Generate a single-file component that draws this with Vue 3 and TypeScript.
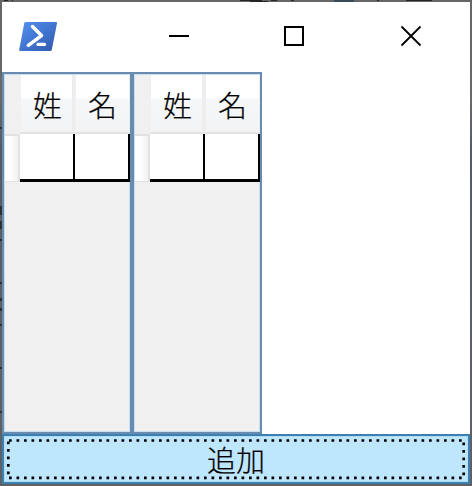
<script setup lang="ts">
const grids: { id: number; columns: string[] }[] = [
  { id: 1, columns: ['姓', '名'] },
  { id: 2, columns: ['姓', '名'] },
]

const marks = [
  { x: 12, y: 0, w: 1 }, { x: 240, y: 0, w: 22 }, { x: 250, y: 1, w: 18 },
  { x: 271, y: 0, w: 6 }, { x: 291, y: 0, w: 3 }, { x: 377, y: 0, w: 2 },
  { x: 406, y: 0, w: 26 }, { x: 4, y: 0, w: 4 },
]
const leftMarks = [
  { y: 127, h: 2 }, { y: 206, h: 9 }, { y: 221, h: 8 }, { y: 239, h: 2 },
  { y: 282, h: 2 }, { y: 298, h: 3 }, { y: 308, h: 3 }, { y: 324, h: 2 },
  { y: 367, h: 2 }, { y: 411, h: 2 },
]
</script>

<template>
  <div class="desktop">
    <svg class="backdrop" width="472" height="486" aria-hidden="true">
      <rect v-for="(m, i) in marks" :key="'t' + i" :x="m.x" :y="m.y" :width="m.w" height="1" fill="#252525" />
      <rect x="334" y="0" width="20" height="2" fill="#394b59" />
      <rect v-for="(m, i) in leftMarks" :key="'l' + i" x="0" :y="m.y" width="2" :height="m.h" fill="#303030" />
    </svg>
    <main class="window">
      <header class="titlebar">
        <svg class="logo" width="40" height="32" viewBox="0 0 40 32">
          <defs>
            <linearGradient id="blue" x1="0" y1="0" x2="1" y2="1">
              <stop offset="0" stop-color="#5391f0" />
              <stop offset=".5" stop-color="#4275d1" />
              <stop offset="1" stop-color="#3158a8" />
            </linearGradient>
          </defs>
          <path d="M7 1H37Q38.2 1 38 2.3L32.8 28.7Q32.5 30 31 30H1.3Q0 30 .2 28.7L5.2 2.3Q5.5 1 7 1Z" fill="url(#blue)" />
          <path d="M13.5 5.6L22.5 14.6L9.3 24.3" fill="none" stroke="#fff" stroke-width="3.5" stroke-linecap="round" stroke-linejoin="round" />
          <path d="M19 23.4H25.5" stroke="#fff" stroke-width="3.2" stroke-linecap="round" />
        </svg>
        <svg class="controls" width="256" height="24" viewBox="0 0 256 24" fill="none" stroke="#000" stroke-width="2">
          <path d="M2 12H22" />
          <rect x="118" y="3" width="18" height="18" />
          <path d="M234.5 2.5L253.5 21.5M253.5 2.5L234.5 21.5" stroke-width="1.8" />
        </svg>
      </header>
      <section class="content">
        <div v-for="grid in grids" :key="grid.id" class="data-grid">
          <div class="head">
            <span class="corner"></span>
            <span v-for="col in grid.columns" :key="col" class="column">{{ col }}</span>
          </div>
          <div class="row">
            <span class="row-header"></span>
            <span v-for="col in grid.columns" :key="col" class="cell"></span>
          </div>
        </div>
      </section>
      <button class="add" type="button">
        <svg class="focus" width="464" height="44" aria-hidden="true" fill="none" stroke="#000" stroke-width="2.7">
          <path d="M5 3.5H458.5" stroke-dasharray="2.7 4.8" />
          <path d="M5 40.8H458.5" stroke-dasharray="2.7 4.8" />
          <path d="M4.3 4.5V39" stroke-dasharray="2.7 4.8" />
          <path d="M459.7 5.5V39" stroke-dasharray="2.7 4.8" />
        </svg>
        <span class="label">追加</span>
      </button>
    </main>
  </div>
</template>

<style>
body {
  margin: 0;
}
</style>

<style scoped>
.desktop {
  position: relative;
  box-sizing: border-box;
  width: 472px;
  height: 486px;
  padding: 2px;
  background: linear-gradient(#666 0, #696969 100px, #555b66 150px, #5c6066 350px, #5e6063 100%);
  font-family: "Noto Sans CJK JP", sans-serif;
  font-weight: 300;
  color: #000;
}
.backdrop {
  position: absolute;
  inset: 0;
}
.window {
  position: relative;
  display: flex;
  flex-direction: column;
  width: 468px;
  height: 482px;
  background: #fff;
}
.titlebar {
  box-sizing: border-box;
  display: flex;
  justify-content: space-between;
  align-items: flex-start;
  height: 70px;
  padding: 19px 47px 0 17px;
}
.controls {
  margin-top: 3px;
}
.content {
  display: flex;
  height: 362px;
}
.data-grid {
  box-sizing: border-box;
  width: 130px;
  height: 362px;
  border: 2px solid #688caf;
  background: #f0f0f0;
  box-shadow: inset 1px 1px #c9def0, inset -1px -1px #c9def0;
}
.head {
  display: flex;
  height: 60px;
  padding: 1px 0 0 1px;
  box-sizing: border-box;
}
.corner {
  width: 15px;
  background: #f0f0f0;
}
.column {
  box-sizing: border-box;
  width: 55px;
  height: 59px;
  padding-left: 2px;
  border: solid #e2e2e2;
  border-width: 0 3px 2px 1px;
  border-right-color: #ededed;
  border-left-color: #f0f0f0;
  background: linear-gradient(#fff 0, #fff 23px, #f6f7f8 24px, #f1f3f5 100%);
  font-size: 29px;
  line-height: 58px;
  text-align: center;
  -webkit-text-stroke: 0.2px #000;
}
.column:last-child {
  padding-left: 0;
  border-right-width: 1px;
}
.row {
  display: flex;
  height: 48px;
  padding-left: 1px;
}
.row-header {
  box-sizing: border-box;
  width: 15px;
  border: solid #e2e2e2;
  border-width: 2px 2px 1px 0;
  background: linear-gradient(90deg, #fff 0, #fff 35%, #f0f1f3 100%);
}
.cell {
  box-sizing: border-box;
  width: 55px;
  border-right: 2px solid #000;
  border-bottom: 3px solid #000;
  background: #fff;
}
.add {
  position: relative;
  box-sizing: border-box;
  display: flex;
  align-items: center;
  justify-content: center;
  width: 468px;
  height: 50px;
  padding: 0;
  border: 2px solid #3c7fb1;
  background: #bee6fd;
  box-shadow: inset 0 0 0 1px #addcf7;
  color: #000;
  font: 300 29px/46px "Noto Sans CJK JP", sans-serif;
}
.focus {
  position: absolute;
  top: 1px;
  left: 0;
}
.label {
  position: relative;
  -webkit-text-stroke: 0.2px #000;
}
</style>
